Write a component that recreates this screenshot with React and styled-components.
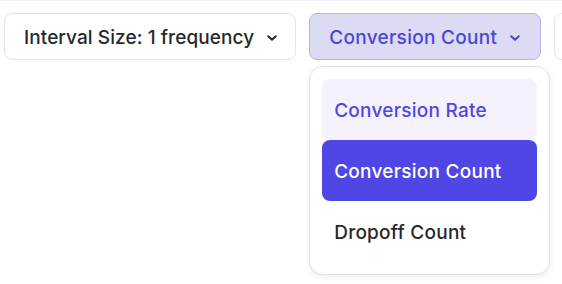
import React from 'react'
import styled, { createGlobalStyle } from 'styled-components'

const GlobalStyle = createGlobalStyle`
    html, body {
        margin: 0;
        padding: 0;
        background: #ffffff;
        overflow: hidden;
    }
    body {
        font-family: Inter, "Noto Sans", sans-serif;
        -webkit-font-smoothing: antialiased;
    }
`;

const options = ['Conversion Rate', 'Conversion Count', 'Dropoff Count']

const Chevron = ({ color }) => (
    <svg width="12" height="12" viewBox="0 0 12 12" fill="none">
        <path d="M2.2 4.2 L6 7.8 L9.8 4.2" stroke={color} strokeWidth="2" strokeLinecap="round" strokeLinejoin="round" />
    </svg>
)

const App = () => {
    return (
        <Page>
            <GlobalStyle />
            <Toolbar>
                <SelectButton>
                    Interval Size: 1 frequency
                    <Chevron color="#27272a" />
                </SelectButton>
                <SelectWrap>
                    <SelectButton $active>
                        Conversion Count
                        <Chevron color="#4c45d4" />
                    </SelectButton>
                    <Menu>
                        {options.map((opt) => (
                            <MenuItem
                                key={opt}
                                $selected={opt === 'Conversion Count'}
                                $hover={opt === 'Conversion Rate'}
                            >
                                {opt}
                            </MenuItem>
                        ))}
                    </Menu>
                </SelectWrap>
                <SelectButton />
            </Toolbar>
        </Page>
    )
}

const Page = styled.div`
    width: 562px;
    height: 284px;
    border-top: 1px solid #f2f2f2;
    box-sizing: border-box;
    overflow: hidden;
`;

const Toolbar = styled.div`
    display: flex;
    gap: 13px;
    padding: 12px 0 0 4px;
`;

const SelectWrap = styled.div`
    position: relative;
    flex-shrink: 0;
`;

const SelectButton = styled.button`
    flex-shrink: 0;
    display: flex;
    align-items: center;
    gap: 12px;
    height: 47px;
    min-width: 60px;
    padding: 2px ${(p) => (p.$active ? '19px' : '17px')} 0 19px;
    box-sizing: border-box;
    border-radius: 8px;
    border: 1px solid ${(p) => (p.$active ? '#b6b3ea' : '#e4e4e7')};
    background: ${(p) => (p.$active ? '#dcdbf4' : '#ffffff')};
    color: ${(p) => (p.$active ? '#4c45d4' : '#27272a')};
    font-family: Inter, "Noto Sans", sans-serif;
    font-size: 19px;
    font-weight: 500;
    letter-spacing: ${(p) => (p.$active ? '0.3px' : '0.08px')};
    cursor: pointer;
`;

const Menu = styled.div`
    position: absolute;
    top: 53px;
    left: 0;
    width: 241px;
    box-sizing: border-box;
    padding: 12px;
    display: flex;
    flex-direction: column;
    background: #ffffff;
    border: 1px solid #e2e2e4;
    border-radius: 14px;
    box-shadow: 0 2px 6px rgba(0, 0, 0, 0.08);
`;

const MenuItem = styled.div`
    height: 61px;
    display: flex;
    align-items: center;
    padding: 2px 12px 0;
    box-sizing: border-box;
    border-radius: 8px;
    font-size: 19px;
    font-weight: 500;
    letter-spacing: 0.25px;
    background: ${(p) => (p.$selected ? '#4f46e5' : p.$hover ? '#f3f2fd' : 'transparent')};
    color: ${(p) => (p.$selected ? '#ffffff' : p.$hover ? '#5046e5' : '#27272a')};
`;

export default App
